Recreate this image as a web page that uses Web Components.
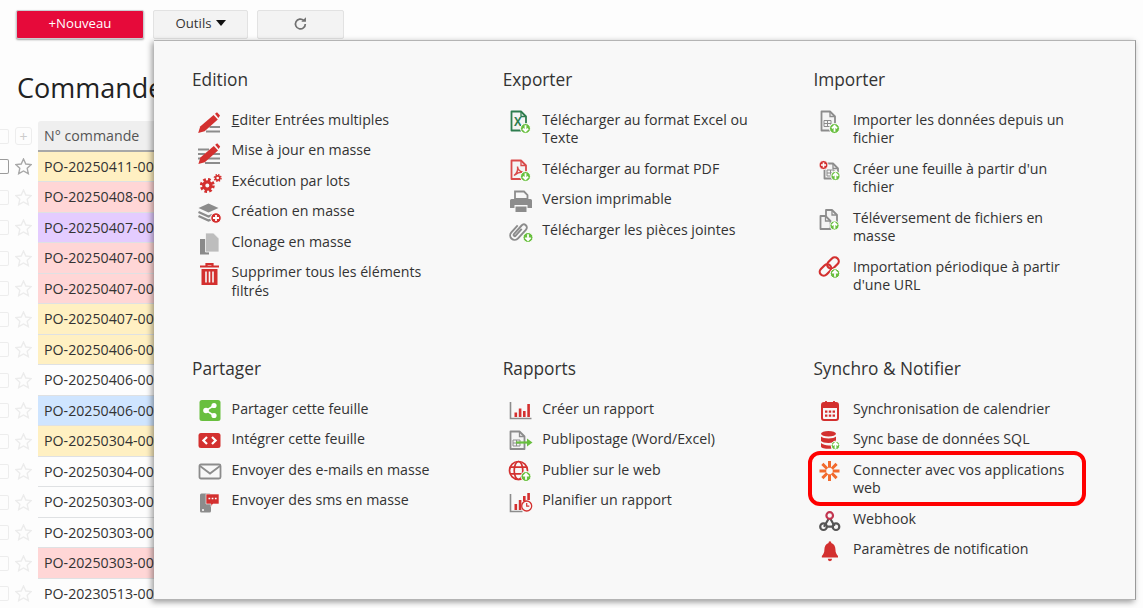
<!DOCTYPE html>
<html lang="fr">
<head>
<meta charset="utf-8">
<title>Commandes</title>
<style>
  html, body { margin: 0; height: 100%; overflow: hidden; background: #fdfdfd; }
  body { font-family: "Open Sans", "Liberation Sans", sans-serif; color: #333; }
</style>
</head>
<body>
<orders-page>
  <tool-button slot="tools" kind="new" style="width:128px">+Nouveau</tool-button>
  <tool-button slot="tools" style="width:95px">Outils <span style="display:inline-block;border:5px solid transparent;border-top:6px solid #111;border-bottom:0;margin:0 0 0 4px;vertical-align:middle"></span></tool-button>
  <tool-button slot="tools" style="width:87px"><menu-icon name="refresh" style="width:16px;height:16px;margin:1px 0 0"></menu-icon></tool-button>

  <order-row slot="rows" tint="#fff0c2" active>PO-20250411-0001</order-row>
  <order-row slot="rows" tint="#ffd6d6">PO-20250408-0001</order-row>
  <order-row slot="rows" tint="#e4ccff">PO-20250407-0004</order-row>
  <order-row slot="rows" tint="#ffd6d6">PO-20250407-0003</order-row>
  <order-row slot="rows" tint="#ffd6d6">PO-20250407-0002</order-row>
  <order-row slot="rows" tint="#fff0c2">PO-20250407-0001</order-row>
  <order-row slot="rows" tint="#fff0c2">PO-20250406-0003</order-row>
  <order-row slot="rows">PO-20250406-0002</order-row>
  <order-row slot="rows" tint="#cfe5ff">PO-20250406-0001</order-row>
  <order-row slot="rows" tint="#fff0c2">PO-20250304-0002</order-row>
  <order-row slot="rows">PO-20250304-0001</order-row>
  <order-row slot="rows">PO-20250303-0004</order-row>
  <order-row slot="rows">PO-20250303-0003</order-row>
  <order-row slot="rows" tint="#ffd6d6">PO-20250303-0002</order-row>
  <order-row slot="rows">PO-20230513-0001</order-row>

  <tools-menu slot="menu">
    <menu-section title="Edition">
      <menu-item icon="edit"><u>E</u>diter Entrées multiples</menu-item>
      <menu-item icon="massedit">Mise à jour en masse</menu-item>
      <menu-item icon="gears">Exécution par lots</menu-item>
      <menu-item icon="layers">Création en masse</menu-item>
      <menu-item icon="copy">Clonage en masse</menu-item>
      <menu-item icon="trash">Supprimer tous les éléments filtrés</menu-item>
    </menu-section>
    <menu-section title="Exporter">
      <menu-item icon="excel">Télécharger au format Excel ou Texte</menu-item>
      <menu-item icon="pdf">Télécharger au format PDF</menu-item>
      <menu-item icon="print">Version imprimable</menu-item>
      <menu-item icon="clip">Télécharger les pièces jointes</menu-item>
    </menu-section>
    <menu-section title="Importer">
      <menu-item icon="importdoc">Importer les données depuis un fichier</menu-item>
      <menu-item icon="newdoc">Créer une feuille à partir d'un fichier</menu-item>
      <menu-item icon="docs">Téléversement de fichiers en masse</menu-item>
      <menu-item icon="link">Importation périodique à partir d'une URL</menu-item>
    </menu-section>
    <menu-section title="Partager">
      <menu-item icon="share">Partager cette feuille</menu-item>
      <menu-item icon="embed">Intégrer cette feuille</menu-item>
      <menu-item icon="mail">Envoyer des e-mails en masse</menu-item>
      <menu-item icon="sms">Envoyer des sms en masse</menu-item>
    </menu-section>
    <menu-section title="Rapports">
      <menu-item icon="report">Créer un rapport</menu-item>
      <menu-item icon="merge">Publipostage (Word/Excel)</menu-item>
      <menu-item icon="globe">Publier sur le web</menu-item>
      <menu-item icon="schedule">Planifier un rapport</menu-item>
    </menu-section>
    <menu-section title="Synchro &amp; Notifier">
      <menu-item icon="calendar">Synchronisation de calendrier</menu-item>
      <menu-item icon="database">Sync base de données SQL</menu-item>
      <menu-item icon="zap" highlight>Connecter avec vos applications web</menu-item>
      <menu-item icon="webhook">Webhook</menu-item>
      <menu-item icon="bell">Paramètres de notification</menu-item>
    </menu-section>
  </tools-menu>
</orders-page>

<script>
const RED = '#d3302f', GREY = '#8c8c8c', GREEN = '#69bf3f';

// small round badge with an arrow, sits bottom right of most icons
const badge = (dir, cx, cy, r = 5) => {
  const a = dir === 'up'
    ? `M${cx} ${cy + 3.2}V${cy - 2.8}M${cx - 2.6} ${cy - .2}L${cx} ${cy - 2.8}L${cx + 2.6} ${cy - .2}`
    : `M${cx} ${cy - 3.2}V${cy + 2.8}M${cx - 2.6} ${cy + .2}L${cx} ${cy + 2.8}L${cx + 2.6} ${cy + .2}`;
  return `<circle cx="${cx}" cy="${cy}" r="${r}" fill="${GREEN}" stroke="#fff" stroke-width="1"/><path d="${a}" fill="none" stroke="#fff" stroke-width="1.8"/>`;
};
const doc = (x, y, w, h, c, sw = 1.8) =>
  `<path d="M${x} ${y}h${w - 5}l5 5v${h - 5}h${-w}z" fill="#f4f4f4" stroke="${c}" stroke-width="${sw}" stroke-linejoin="round"/><path d="M${x + w - 5} ${y}v5h5" fill="none" stroke="${c}" stroke-width="1.3"/>`;
const grid = (x, y) =>
  `<path d="M${x} ${y}h7v6h-7zM${x + 3.5} ${y}v6M${x} ${y + 3}h7" fill="none" stroke="${GREY}" stroke-width="1"/>`;
const gear = (cx, cy, r, t) =>
  `<circle cx="${cx}" cy="${cy}" r="${r}" fill="none" stroke="${RED}" stroke-width="${t}"/><circle cx="${cx}" cy="${cy}" r="${r + t * .75}" fill="none" stroke="${RED}" stroke-width="${t * .9}" stroke-dasharray="${(r + t * .75) * .785 * .55} ${(r + t * .75) * .785 * .45}"/>`;
const axes = `<path d="M2.5 3v16.500h21" fill="none" stroke="${GREY}" stroke-width="1.600"/>`;

const ICONS = {
  refresh: `<path d="M20 13a8 8 0 1 1-2.600-5.900" fill="none" stroke="#707070" stroke-width="2.800"/><path d="M21 2v7.500h-7.500z" fill="#707070"/>`,
  edit: `<path d="M12.5 17h10.5M9 21.500h14" stroke="${GREY}" stroke-width="2.2"/><path d="M1.2 23l2-6.400L16.600 5l4.200 4.600L7.600 21.200z" fill="${RED}"/><path d="M18 3.800l2-1.600 3 3.200-1.600 2.600z" fill="${RED}"/>`,
  massedit: `<path d="M1 9.500h11M1 14h7M13 14h10M1 18.500h3M10 18.500h13M8 23h15" stroke="${GREY}" stroke-width="2"/><path d="M1.400 24l2-6.400L16.800 6l4.200 4.600L7.800 22.200z" fill="${RED}"/><path d="M18.200 4.800l2-1.600 3 3.200-1.600 2.600z" fill="${RED}"/>`,
  gears: gear(10.3, 14.5, 3.6, 3.2) + gear(20.7, 7, 2.1, 1.6),
  layers: `<path d="M1.500 7L11.500 2.500l10 4.500-10 4.500z" fill="${GREY}"/><path d="M1.500 11l10 4.500 4-1.800M1.500 15l10 4.500 2.600-1.100" fill="none" stroke="${GREY}" stroke-width="2.200"/><circle cx="19" cy="17" r="5.300" fill="${RED}" stroke="#fff" stroke-width="1"/><path d="M16 17h6M19 14v6" stroke="#fff" stroke-width="1.800"/>`,
  copy: `<path d="M3 7h9v15.500H3z" fill="#8a8a8a"/><path d="M8.500 1h8l5.500 5.500V20H8.500z" fill="#bdbdbd" stroke="#f8f8f8" stroke-width=".8"/>`,
  trash: `<path d="M3 4.500h19M9.500 4.500V2h6v2.500" fill="none" stroke="${RED}" stroke-width="2.200"/><path d="M4.500 7h16v16h-16z" fill="${RED}"/><path d="M9 9.500v11M12.500 9.500v11M16 9.500v11" stroke="#f8f8f8" stroke-width="1.600"/>`,
  excel: doc(3.5, 1.5, 14.5, 19, '#2e7d4f') + `<text x="6" y="15.500" font-family="Open Sans" font-weight="700" font-size="11.500" fill="#2e7d4f">X</text>` + badge('down', 17.5, 18.5),
  pdf: doc(3.5, 1.5, 14.5, 18.5, '#d94a4a') + `<path d="M6 16.500c3-2 4-6 3.500-9 .5 3 2.500 5 5 5.500-3 0-6 1.500-8.500 3.500z" fill="none" stroke="#d94a4a" stroke-width="1.400"/>` + badge('down', 17.5, 17.5),
  print: `<path d="M7 2.500h9l3.500 3.500v4H7z" fill="none" stroke="${GREY}" stroke-width="1.800"/><path d="M3.500 10h19a1.500 1.500 0 0 1 1.500 1.500V19h-4.500v-3h-13v3H2v-7.500A1.500 1.500 0 0 1 3.500 10z" fill="${GREY}"/><path d="M7.500 17.500h11V23h-11z" fill="${GREY}"/>`,
  clip: `<path d="M6 8v9.500a4.500 4.500 0 0 0 9 0V5.500a3 3 0 0 0-6 0v11.500a1.200 1.200 0 0 0 2.400 0V8" fill="none" stroke="${GREY}" stroke-width="1.900" transform="rotate(42 10 11) translate(0 -1)"/>` + badge('down', 20, 17.5),
  importdoc: doc(3.5, 1.5, 13.5, 19, GREY) + grid(6, 10.5) + badge('up', 16.5, 18.5),
  newdoc: doc(6.5, 4.5, 13.5, 15, GREY) + grid(9, 11) + `<circle cx="5.500" cy="6" r="4.500" fill="${RED}" stroke="#fff"/><path d="M3 6h5M5.500 3.500v5" stroke="#fff" stroke-width="1.600"/>` + badge('up', 17.5, 17, 4.6),
  docs: doc(8, 2, 11, 14, GREY) + doc(2.500, 8, 10, 13, GREY) + badge('up', 16.5, 17.500, 4.6),
  link: `<g fill="none" stroke="${RED}" stroke-width="2.200"><rect x="1" y="9" width="13" height="8" rx="4" transform="rotate(-45 7.500 13)"/><rect x="8.500" y="2" width="13" height="8" rx="4" transform="rotate(-45 15 6)"/></g>` + badge('up', 17, 16.500, 4.8),
  share: `<rect x="2.500" y="1" width="21" height="21" rx="2.500" fill="${GREEN}"/><path d="M17 6.500L9 11.500l8 5" fill="none" stroke="#fff" stroke-width="1.500"/><circle cx="9" cy="11.500" r="2.800" fill="#fff"/><circle cx="17" cy="6.500" r="2.600" fill="#fff"/><circle cx="17" cy="16.500" r="2.600" fill="#fff"/>`,
  embed: `<rect x="1.500" y="4" width="22" height="15" rx="2.500" fill="${RED}"/><path d="M10 8l-3.600 3.500 3.600 3.500M15 8l3.600 3.500-3.600 3.500" fill="none" stroke="#fff" stroke-width="2.200"/>`,
  mail: `<rect x="2.500" y="4.500" width="21" height="14" rx="1.500" fill="none" stroke="${GREY}" stroke-width="1.800"/><path d="M3 6l10 7.500L23 6" fill="none" stroke="${GREY}" stroke-width="1.800"/>`,
  sms: `<rect x="3" y="3.500" width="11" height="19" rx="1.500" fill="${GREY}"/><circle cx="6" cy="20" r="1" fill="#fff"/><path d="M9 4h13v10h-6l-2 2.500V14H9z" fill="${RED}" stroke="#f8f8f8" stroke-width=".6"/><path d="M11.500 8.500h1.700M14.700 8.500h1.700M17.900 8.500h1.700" stroke="#fff" stroke-width="1.600"/>`,
  report: axes + `<path d="M6.500 13.500h2.600v4.500H6.500zM10.800 9.500h2.600V18h-2.600zM15 12h2.600v6H15zM19.300 5h2.600v13h-2.600z" fill="${RED}"/>`,
  merge: doc(2.500, 2.500, 14, 17.500, GREY) + grid(5, 11) + `<path d="M8 13.500h12" stroke="${GREEN}" stroke-width="2.200"/><path d="M19 9.500l5.500 4-5.500 4z" fill="${GREEN}"/>`,
  globe: `<g fill="none" stroke="${RED}" stroke-width="1.700"><circle cx="10.500" cy="10.500" r="9"/><ellipse cx="10.500" cy="10.500" rx="4.300" ry="9"/><path d="M2 7.200h17M2 13.800h17"/></g>` + badge('up', 18, 16.5),
  schedule: `<path d="M2.500 4v17.500h12" fill="none" stroke="${GREY}" stroke-width="1.600"/><path d="M6.500 14h2.600v6H6.500zM10.800 10h2.600v10h-2.600zM15 6h2.600v5.500H15zM19.300 3h2.600v7h-2.600z" fill="${RED}"/><circle cx="18.700" cy="16" r="5" fill="#f8f8f8" stroke="${RED}" stroke-width="1.300"/><path d="M18.700 13v3.200h2.600" fill="none" stroke="${RED}" stroke-width="1.200"/>`,
  calendar: `<rect x="4" y="4" width="16" height="17" rx="2" fill="none" stroke="${RED}" stroke-width="2"/><path d="M4 4.500h16V9H4z" fill="${RED}"/><path d="M8 2v4M16 2v4" stroke="${RED}" stroke-width="1.800"/><path d="M7 11.500h2.400v2.200H7zM10.800 11.500h2.400v2.200h-2.400zM14.600 11.500H17v2.200h-2.400zM7 15.500h2.400v2.200H7zM10.800 15.500h2.400v2.200h-2.400zM14.600 15.500H17v2.200h-2.400z" fill="${RED}"/>`,
  database: `<ellipse cx="10.500" cy="4.700" rx="7.500" ry="2.800" fill="${RED}"/><path d="M3 7.500c2 2.600 13 2.600 15 0V12c-2 2.600-13 2.600-15 0zM3 14c2 2.300 7 2.700 10.500 2.200-.5 1.200-.5 2.400-.2 3.500C9 20.100 3 19.300 3 17.500z" fill="${RED}"/>` + badge('up', 17.5, 16.5, 4.3),
  zap: `<g stroke="#f26a2e" stroke-width="3" transform="translate(-1 -1.500)"><path d="M2.500 12.500h6.800M15.700 12.500h6.800M12.500 2.500v6.800M12.500 15.700v6.800M5.400 5.400l4.800 4.800M14.800 14.800l4.800 4.800M19.600 5.400l-4.800 4.800M10.200 14.800l-4.800 4.800"/></g>`,
  webhook: `<g fill="none" stroke-width="2.200"><path d="M6 17.700L10.500 10M8 17.700h8M12.500 10l4 7" stroke="#555"/><circle cx="11.700" cy="6.500" r="3.300" stroke="#c2344f"/><circle cx="5.500" cy="17.700" r="3.300" stroke="#555"/><circle cx="18" cy="17.700" r="3.300" stroke="#555"/></g>`,
  bell: `<g transform="translate(1.300 -.6) scale(.85 .95)"><path d="M12.500 3a1.600 1.600 0 0 1 1.600 1.800c3.400.9 4.900 3.700 4.900 7 0 3.500 1.300 5 3 6.700v1.500H3v-1.500c1.700-1.700 3-3.200 3-6.700 0-3.300 1.500-6.100 4.900-7A1.600 1.600 0 0 1 12.500 3z" fill="${RED}"/><path d="M10 21.500h5a2.500 2.500 0 0 1-5 0z" fill="${RED}"/></g>`
};

class MenuIcon extends HTMLElement {
  connectedCallback() {
    if (this.shadowRoot) return;
    this.attachShadow({ mode: 'open' }).innerHTML = `
      <style>
        :host { display: inline-block; width: 26px; height: 26px; flex: none; }
        svg { display: block; width: 100%; height: 100%; overflow: visible; }
      </style>
      <svg viewBox="0 0 26 26">${ICONS[this.getAttribute('name')] || ''}</svg>`;
  }
}
customElements.define('menu-icon', MenuIcon);

class ToolButton extends HTMLElement {
  constructor() {
    super();
    this.attachShadow({ mode: 'open' }).innerHTML = `
      <style>
        :host {
          display: flex; align-items: center; justify-content: center;
          box-sizing: border-box; height: 29px; padding-bottom: 3px;
          font-size: 13.2px; color: #333;
          background: #f3f3f3; border: 1px solid #e2e2e2; border-radius: 2px;
        }
        :host([kind="new"]) {
          color: #fff; background: #e60a3a; border-color: #c9cdd0;
          box-shadow: 0 1px 2px rgba(0,0,0,.35);
        }
      </style>
      <slot></slot>`;
  }
}
customElements.define('tool-button', ToolButton);

class OrderRow extends HTMLElement {
  constructor() {
    super();
    this.attachShadow({ mode: 'open' }).innerHTML = `
      <style>
        :host { display: flex; align-items: center; height: 30.5px; }
        .box {
          box-sizing: border-box; width: 14px; height: 15px; flex: none;
          border: 1.5px solid #ededed; border-left: 0; border-radius: 2px; margin-right: 6px;
        }
        svg { width: 17px; height: 17px; flex: none; margin-right: 6px; }
        path { fill: none; stroke: #ececec; stroke-width: 1.4; }
        .cell {
          flex: 1; box-sizing: border-box; height: 100%;
          display: flex; align-items: center; padding-left: 6px;
          font-size: 14.2px; white-space: nowrap; color: #333;
          border-bottom: 1px solid #dfe1e3;
        }
        :host([active]) .box { border-color: #9b9b9b; }
        :host([active]) path { stroke: #a8a8a8; }
      </style>
      <span class="box"></span>
      <svg viewBox="0 0 17 17"><path d="M8.500 1l2.300 5 5.400.6-4 3.700 1.100 5.400-4.800-2.700-4.800 2.700 1.100-5.400-4-3.700 5.400-.6z"/></svg>
      <div class="cell"><slot></slot></div>`;
    const tint = this.getAttribute('tint');
    if (tint) this.shadowRoot.querySelector('.cell').style.background = tint;
  }
}
customElements.define('order-row', OrderRow);

class MenuSection extends HTMLElement {
  constructor() {
    super();
    this.attachShadow({ mode: 'open' }).innerHTML = `
      <style>
        :host { display: block; }
        h3 { margin: 0 0 18.5px; font-size: 17.3px; line-height: 24px; font-weight: 400; color: #333; }
        .items { display: flex; flex-direction: column; gap: 12px; padding-left: 5px; }
      </style>
      <h3></h3>
      <div class="items"><slot></slot></div>`;
    this.shadowRoot.querySelector('h3').textContent = this.getAttribute('title');
    this.removeAttribute('title');
  }
}
customElements.define('menu-section', MenuSection);

class MenuItem extends HTMLElement {
  connectedCallback() {
    if (this.shadowRoot) return;
    this.attachShadow({ mode: 'open' }).innerHTML = `
      <style>
        :host { display: flex; gap: 8.6px; position: relative; }
        /* the icon hangs over the row gap, only the text sets the row height */
        menu-icon { margin: -1px 0 -9px; }
        .label { width: 225px; font-size: 14.2px; line-height: 18.5px; color: #333; }
        :host([highlight])::after {
          content: ""; position: absolute; left: -10px; top: -9.5px; right: 38px; bottom: -8.5px;
          border: 4px solid #f00; border-radius: 12px;
        }
      </style>
      <menu-icon name="${this.getAttribute('icon')}"></menu-icon>
      <div class="label"><slot></slot></div>`;
  }
}
customElements.define('menu-item', MenuItem);

class ToolsMenu extends HTMLElement {
  constructor() {
    super();
    this.attachShadow({ mode: 'open' }).innerHTML = `
      <style>
        :host {
          position: absolute; left: 154px; top: 40px;
          box-sizing: border-box; width: 982px; height: 560px;
          padding: 27px 0 0 38px;
          display: grid; grid-template-columns: repeat(3, 310.7px); grid-template-rows: 289px auto;
          background: #f8f8f8; border: 1px solid #b4b4b4; border-right-color: #999; border-left: 0;
          box-shadow: -2px 2px 6px rgba(0,0,0,.4);
        }
      </style>
      <slot></slot>`;
  }
}
customElements.define('tools-menu', ToolsMenu);

class OrdersPage extends HTMLElement {
  constructor() {
    super();
    this.attachShadow({ mode: 'open' }).innerHTML = `
      <style>
        :host { display: block; height: 608px; position: relative; overflow: hidden; }
        .bar { display: flex; gap: 9px; padding: 10px 0 0 16px; }
        h1 { margin: 29px 0 0 17px; font-size: 27px; line-height: 40px; font-weight: 400; color: #222; white-space: nowrap; }
        .table { margin: 13px 0 0 -5px; width: 1100px; }
        .head { display: flex; align-items: center; height: 30.5px; }
        .head i { box-sizing: border-box; display: block; width: 14px; height: 15px; margin-right: 6px; border: 1.5px solid #ededed; border-left: 0; border-radius: 2px; }
        .head b {
          box-sizing: border-box; width: 17px; height: 18px; margin-right: 6px; border: 1px solid #ededed; border-radius: 3px;
          display: flex; align-items: center; justify-content: center; font-weight: 400; color: #ccc; font-size: 14px;
        }
        .head span {
          flex: 1; box-sizing: border-box; height: 100%; display: flex; align-items: center; padding-left: 6px;
          font-size: 14.2px; color: #555; background: #efefef; border-bottom: 2px solid #a8a8a8; border-top-left-radius: 3px;
        }
      </style>
      <div class="bar"><slot name="tools"></slot></div>
      <h1>Commandes</h1>
      <div class="table">
        <div class="head"><i></i><b>+</b><span>N° commande</span></div>
        <slot name="rows"></slot>
      </div>
      <slot name="menu"></slot>`;
  }
}
customElements.define('orders-page', OrdersPage);
</script>
</body>
</html>
